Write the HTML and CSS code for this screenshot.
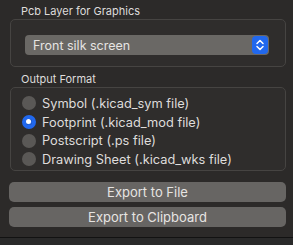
FILE: index.html
```html
<!DOCTYPE html>
<html lang="en">
<head>
    <meta charset="UTF-8">
    <title>Export Graphics</title>
    <link rel="stylesheet" href="styles.css">
</head>
<body>
    <div class="panel">
        <div class="group-label">Pcb Layer for Graphics</div>
        <div class="group-box layer-box">
            <div class="select">
                <span class="select-text">Front silk screen</span>
                <span class="stepper">
                    <svg width="10" height="14" viewBox="0 0 10 14">
                        <path d="M2 5.5 L5 2.5 L8 5.5 M2 8.5 L5 11.5 L8 8.5" fill="none" stroke="#fff" stroke-width="1.5" stroke-linecap="round" stroke-linejoin="round"/>
                    </svg>
                </span>
            </div>
        </div>

        <div class="group-label second">Output Format</div>
        <div class="group-box format-box">
            <label class="radio"><span class="dot"></span>Symbol (.kicad_sym file)</label>
            <label class="radio"><span class="dot checked"></span>Footprint (.kicad_mod file)</label>
            <label class="radio"><span class="dot"></span>Postscript (.ps file)</label>
            <label class="radio"><span class="dot"></span>Drawing Sheet (.kicad_wks file)</label>
        </div>

        <div class="buttons">
            <button>Export to File</button>
            <button>Export to Clipboard</button>
        </div>
    </div>
    <div class="footer"></div>
</body>
</html>
```

FILE: styles.css
```css
body {
    margin: 0;
    background-color: #2c2a29;
    font-family: Inter, "Noto Sans", sans-serif;
    color: #dedcdb;
    width: 293px;
    height: 245px;
    overflow: hidden;
}
.panel {
    padding: 0 7px 10px 10px;
    height: 227px;
}
.group-label {
    font-size: 11px;
    line-height: 15px;
    padding: 4px 0 0 11px;
    height: 15px;
}
.group-label.second {
    padding-top: 5px;
}
.group-box {
    border: 1px solid #464442;
    border-radius: 5px;
    background-color: #2f2d2c;
}
.layer-box {
    padding: 15px 16px 0 14px;
    box-sizing: border-box;
    height: 48px;
}
.select {
    height: 20px;
    background-color: #6a6865;
    border-radius: 4px;
    display: flex;
    align-items: center;
    justify-content: space-between;
    padding: 0 1px 0 8px;
}
.select-text {
    font-size: 12.5px;
    color: #e6e4e2;
}
.stepper {
    width: 16px;
    height: 18px;
    background-color: #2168ee;
    border-radius: 4px;
    display: flex;
    align-items: center;
    justify-content: center;
}
.format-box {
    height: 84px;
    box-sizing: border-box;
    padding: 6px 0 0 11px;
}
.radio {
    display: flex;
    align-items: center;
    gap: 6px;
    height: 18.7px;
    font-size: 12.8px;
}
.dot {
    width: 14px;
    height: 14px;
    border-radius: 50%;
    background-color: #5a5856;
    box-sizing: border-box;
}
.dot.checked {
    background-color: #2168ee;
    border: 4.5px solid #2168ee;
    background-clip: padding-box;
    position: relative;
}
.dot.checked::after {
    content: "";
    position: absolute;
    left: 0;
    top: 0;
    width: 5px;
    height: 5px;
    border-radius: 50%;
    background-color: #fff;
}
.buttons {
    display: flex;
    flex-direction: column;
    gap: 5px;
    margin: 11px 0 0 -1px;
}
button {
    height: 20px;
    border: none;
    border-radius: 5px;
    background-color: #676563;
    color: #e6e4e2;
    font-family: Inter, "Noto Sans", sans-serif;
    font-size: 13px;
    padding: 0;
}
.footer {
    border-top: 1px solid #121212;
    background-color: #2a2a2a;
    height: 8px;
}
```
